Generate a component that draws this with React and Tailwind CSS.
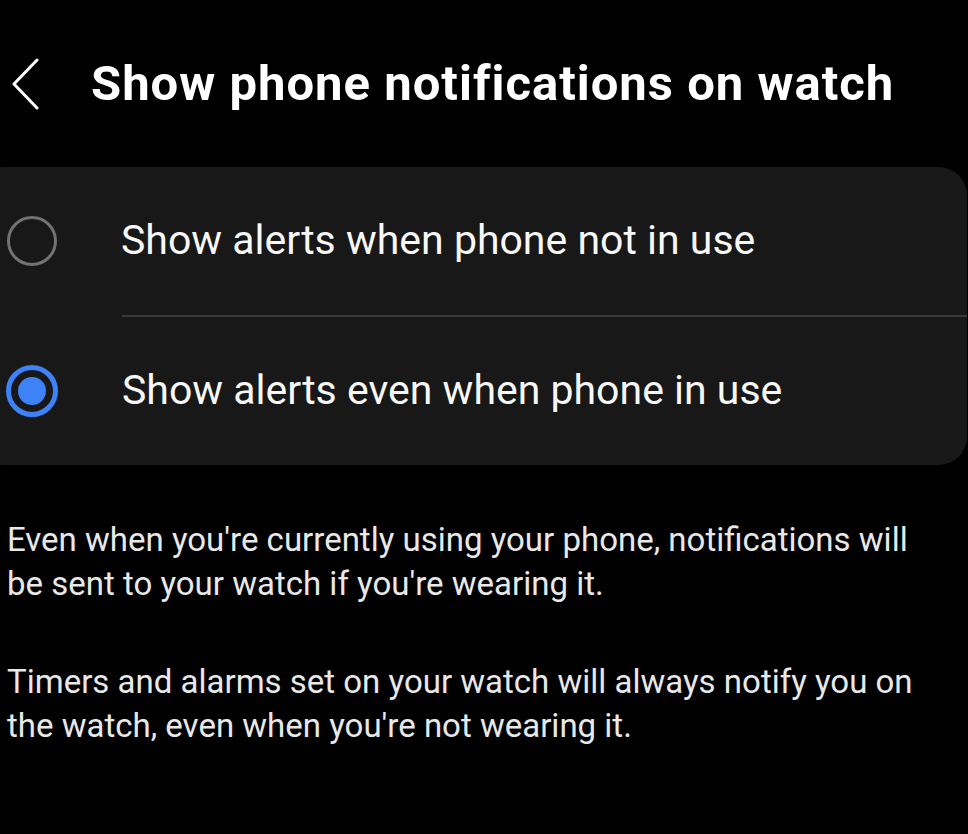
import React, { useState } from 'react';

const options = [
  { id: 'idle', label: 'Show alerts when phone not in use' },
  { id: 'always', label: 'Show alerts even when phone in use' },
];

const Radio = ({ checked }) => (
  checked ? (
    <span className="flex h-[52px] w-[52px] shrink-0 items-center justify-center rounded-full border-[5px] border-[#3e82f7]">
      <span className="h-[28px] w-[28px] rounded-full bg-[#3e82f7]" />
    </span>
  ) : (
    <span className="ml-px h-[50px] w-[50px] shrink-0 rounded-full border-[3px] border-[#727272]" />
  )
);

const App = () => {
  const [selected, setSelected] = useState('always');

  return (
    <div className="h-[834px] w-[968px] overflow-hidden bg-black text-white" style={{ fontFamily: 'Roboto, "Noto Sans", sans-serif' }}>
      <div className="flex h-[167px] items-center">
        <button className="ml-[11px] flex h-[52px] w-[30px] items-center justify-center">
          <svg width="30" height="52" viewBox="0 0 30 52" fill="none">
            <path d="M26 2 L3 26 L26 50" stroke="#ffffff" strokeWidth="3" strokeLinecap="round" strokeLinejoin="round" />
          </svg>
        </button>
        <h1 className="ml-[50px] whitespace-nowrap text-[49px] font-bold tracking-[1px] text-white">Show phone notifications on watch</h1>
      </div>

      <div className="-ml-6 mr-px flex flex-col rounded-[28px] bg-[#181818]">
        {options.map((opt, i) => (
          <React.Fragment key={opt.id}>
            {i > 0 && <div className="ml-[146px] h-[2px] bg-[#3a3a3a]" />}
            <button
              onClick={() => setSelected(opt.id)}
              className="flex h-[148px] items-center pl-[30px] text-left"
            >
              <Radio checked={selected === opt.id} />
              <span className="ml-[64px] text-[41px] text-[#f7f7f7]">{opt.label}</span>
            </button>
          </React.Fragment>
        ))}
      </div>

      <div className="mt-[53px] pl-[7px] pr-4 text-[33px] leading-[44px] text-[#e8e8e8]">
        <p className="w-[930px]">Even when you're currently using your phone, notifications will be sent to your watch if you're wearing it.</p>
        <p className="mt-[54px] w-[930px]">Timers and alarms set on your watch will always notify you on the watch, even when you're not wearing it.</p>
      </div>
    </div>
  );
};

export default App;
